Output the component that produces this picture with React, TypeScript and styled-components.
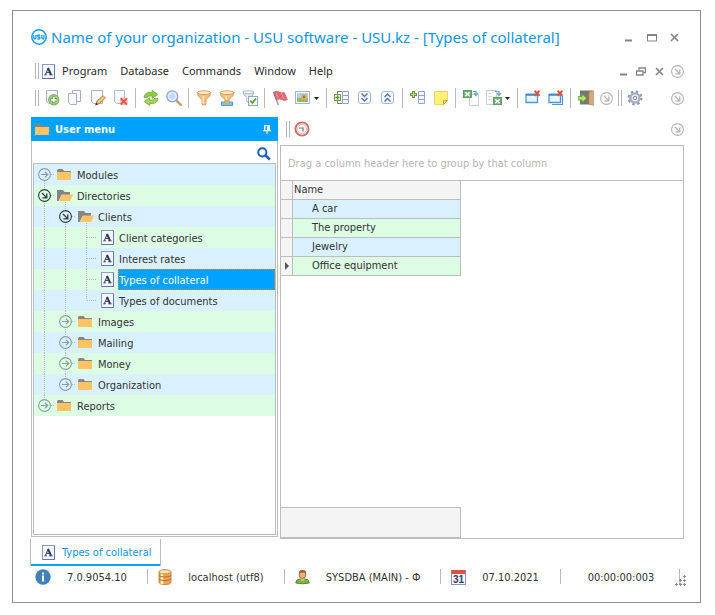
import React, { useState } from "react";
import styled, { createGlobalStyle, css } from "styled-components";

const ACCENT = "#00a2ff";
const LINE = "#bdbdbd";
const BLUE_ROW = "#d9f1ff";
const GREEN_ROW = "#dcfce4";

const GlobalStyle = createGlobalStyle`
  *, *::before, *::after { box-sizing: border-box; }
  body { margin: 0; background: #fff; }
  body, button, table { font-family: "DejaVu Sans Condensed", "DejaVu Sans", sans-serif; font-size: 11px; color: #333; }
  button { padding: 0; margin: 0; border: 0; background: none; line-height: inherit; cursor: pointer; }
  svg { display: block; flex: none; }
`;

/* ---------- window frame ---------- */

const Page = styled.div`
  display: flex;
  min-height: 100vh;
  padding: 10px 14px 12px 12px;
`;
const AppWindow = styled.div`
  display: flex;
  flex-direction: column;
  flex: 1;
  min-width: 0;
  border: 1px solid #8f8f8f;
  padding: 6px 14px 12px 17px;
`;
const TitleBar = styled.header`
  display: flex;
  align-items: center;
  height: 40px;
  padding-left: 1px;
  gap: 4px;
`;
const Title = styled.h1`
  flex: 1;
  margin: 0;
  font: 400 15px/24px "Noto Sans", sans-serif;
  color: #0d97e8;
  white-space: nowrap;
`;
const Controls = styled.div<{ $size: number }>`
  display: flex;
  align-items: center;
  button {
    display: flex;
    align-items: center;
    justify-content: center;
    width: ${(p) => p.$size}px;
    height: 20px;
  }
`;
const MenuBar = styled.nav`
  display: flex;
  align-items: center;
  height: 28px;
  padding-left: 5px;
`;
const Spacer = styled.span`
  flex: 1;
`;
const MenuList = styled.div`
  display: flex;
  gap: 13px;
  padding-left: 7px;
`;
const MenuItem = styled.button`
  font: 400 11px/20px "Noto Sans", sans-serif;
  color: #2b2b2b;
`;
const Grip = styled.span<{ $gap?: number; $before?: number }>`
  flex: none;
  width: 4px;
  height: 16px;
  margin-left: ${(p) => p.$before ?? 0}px;
  margin-right: ${(p) => p.$gap ?? 3}px;
  border: solid #b5b5b5;
  border-width: 0 1px;
`;

/* ---------- tool bars ---------- */

const ToolBar = styled.div`
  display: flex;
  align-items: center;
  height: 26px;
  padding-left: 5px;
  margin-bottom: 6px;
`;
const ToolButton = styled.button<{ $menu?: boolean }>`
  display: flex;
  align-items: center;
  flex: none;
  gap: 3px;
  width: ${(p) => (p.$menu ? 32 : 23)}px;
  height: 22px;
  padding-left: 4px;
`;
const Divider = styled.span`
  flex: none;
  width: 1px;
  height: 20px;
  margin: 0 3px;
  background: #b8b8b8;
`;
const RoundButton = styled.button`
  display: flex;
  align-items: center;
  justify-content: center;
  width: 18px;
  height: 18px;
`;

/* ---------- body ---------- */

const Workspace = styled.main`
  display: grid;
  grid-template-columns: 247px minmax(0, 1fr);
  gap: 2px;
  flex: 1;
  padding: 0 2px 0 1px;
`;
const SidePanel = styled.aside`
  display: flex;
  flex-direction: column;
  border: 1px solid ${LINE};
  border-top: 0;
`;
const PanelHeader = styled.div`
  display: flex;
  align-items: center;
  height: 24px;
  margin: 0 -1px;
  padding: 0 7px 0 4px;
  gap: 6px;
  background: ${ACCENT};
  color: #fff;
  font-weight: 700;
`;
const SearchRow = styled.div`
  display: flex;
  justify-content: flex-end;
  height: 22px;
  padding: 4px 6px 0 0;
`;
const TreeBox = styled.div`
  flex: 1;
  margin: 0 1px 1px;
  border: 1px solid ${LINE};
`;
const Tree = styled.ul`
  list-style: none;
  margin: 0;
  padding: 0;
`;
const TreeRow = styled.li<{ $green: boolean }>`
  display: flex;
  height: 21px;
  background: ${(p) => (p.$green ? GREEN_ROW : BLUE_ROW)};
`;

type Guide = "none" | "full" | "top" | "bottom";
const dotsDown = "repeating-linear-gradient(to bottom, #b4bcbc 0 1px, transparent 1px 2px)";
const dotsAcross = "repeating-linear-gradient(to right, #b4bcbc 0 1px, transparent 1px 2px)";
const guideLayer: Record<Guide, string> = {
  none: "linear-gradient(transparent, transparent) 0 0 / 0 0 no-repeat",
  full: `${dotsDown} 10px 0 / 1px 21px no-repeat`,
  top: `${dotsDown} 10px 0 / 1px 10px no-repeat`,
  bottom: `${dotsDown} 10px 11px / 1px 10px no-repeat`,
};
const Cell = styled.span<{ $guide?: Guide; $branch?: boolean }>`
  display: flex;
  align-items: center;
  justify-content: center;
  flex: none;
  width: 21px;
  height: 21px;
  background: ${(p) => guideLayer[p.$guide || "none"]}${(p) =>
    p.$branch ? `, ${dotsAcross} 11px 10px / 10px 1px no-repeat` : ""};
`;
const IconCell = styled(Cell)<{ $inset: number }>`
  justify-content: flex-start;
  padding-left: ${(p) => p.$inset}px;
`;
const Toggle = styled.button<{ $green: boolean }>`
  border-radius: 50%;
  background: ${(p) => (p.$green ? GREEN_ROW : BLUE_ROW)};
`;
const NodeLabel = styled.button<{ $selected: boolean }>`
  flex: 1;
  padding: 2px 0 0 1px;
  line-height: 19px;
  text-align: left;
  ${(p) =>
    p.$selected &&
    css`
      background: ${ACCENT};
      color: #fff;
      outline: 1px dotted #d08050;
      outline-offset: -1px;
    `}
`;

const Content = styled.section`
  display: flex;
  flex-direction: column;
  min-width: 0;
`;
const ContentBar = styled.div`
  display: flex;
  align-items: center;
  height: 24px;
  margin-bottom: 4px;
  padding-left: 6px;
  margin-right: -2px;
`;
const GridFrame = styled.div`
  display: flex;
  flex-direction: column;
  align-items: flex-start;
  flex: 1;
  border: 1px solid ${LINE};
  margin-bottom: -2px;
`;
const GroupHint = styled.div`
  align-self: stretch;
  height: 35px;
  padding-left: 7px;
  border-bottom: 1px solid ${LINE};
  line-height: 36px;
  color: #b4b4b4;
`;
const DataTable = styled.table`
  width: 180px;
  border-collapse: separate;
  border-spacing: 0;
  table-layout: fixed;
  th, td {
    height: 19px;
    padding: 0;
    border: solid ${LINE};
    border-width: 0 1px 1px 0;
    text-align: left;
    font-weight: 400;
    line-height: 18px;
    white-space: nowrap;
  }
`;
const HeadCell = styled.th`
  background: #f4f4f4;
  && { padding-left: 1px; }
`;
const MarkerCell = styled.th`
  width: 12px;
  background: #f4f4f4;
  svg { margin: 0 auto; }
`;
const ValueCell = styled.td<{ $green: boolean }>`
  background: ${(p) => (p.$green ? GREEN_ROW : BLUE_ROW)};
  && { padding-left: 19px; }
`;
const Summary = styled.div`
  width: 180px;
  height: 31px;
  margin-top: auto;
  background: #f4f4f4;
  border: 1px solid ${LINE};
  border-left: 0;
`;

/* ---------- tabs and status ---------- */

const TabStrip = styled.div`
  display: flex;
  margin-top: 2px;
`;
const Tab = styled.button`
  display: flex;
  align-items: center;
  gap: 7px;
  height: 27px;
  padding: 0 9px 0 11px;
  border: solid ${LINE};
  border-width: 0 1px;
  box-shadow: inset 0 -2px ${ACCENT};
  color: #1293e2;
`;
const StatusBar = styled.footer`
  display: grid;
  grid-template-columns: 118fr 136fr 156fr 119fr 119fr 6px;
  height: 24px;
  padding: 2px 0 4px;
`;
const StatusCell = styled.div<{ $end?: boolean }>`
  display: flex;
  align-items: center;
  gap: 16px;
  padding-left: ${(p) => (p.$end ? 27 : 10)}px;
  white-space: nowrap;
  background: linear-gradient(#b8b8b8, #b8b8b8) right 1px / 1px 15px no-repeat;
  &:first-child { padding-left: 5px; }
`;
const ResizeMark = styled.span`
  display: flex;
  align-items: flex-end;
  justify-content: flex-end;
`;

/* ---------- drawings ---------- */

const Svg = ({ w = 16, h = 16, children }: { w?: number; h?: number; children: React.ReactNode }) => (
  <svg width={w} height={h} viewBox={`0 0 ${w} ${h}`} fill="none" aria-hidden="true">
    {children}
  </svg>
);

const Logo = () => (
  <Svg>
    <circle cx="8" cy="8" r="7.2" stroke="#149be9" strokeWidth="1.5" />
    <path d="M2.8 6v2.6q0 1.4 1.1 1.4T5 8.6V6M9 6.7Q8.6 6 7.8 6 6.6 6 6.6 7T7.8 8 9 9 7.8 10 6.5 9.3M10.8 6v2.6q0 1.4 1.1 1.4T13 8.6V6" stroke="#149be9" strokeWidth="1.3" />
  </Svg>
);

const RoundArrow = ({ color, down }: { color: string; down?: boolean }) => (
  <Svg w={13} h={13}>
    <circle cx="6.5" cy="6.5" r="5.9" stroke={color} strokeWidth="1.1" />
    {down ? (
      <path d="M4 4l4.6 4.6M8.8 4.4v4.4H4.4" stroke={color} strokeWidth="1.3" />
    ) : (
      <path d="M3 6.5h6.5M6.8 3.6l2.9 2.9-2.9 2.9" stroke={color} strokeWidth="1.2" />
    )}
  </Svg>
);

const FormIcon = () => (
  <Svg w={13} h={15}>
    <rect x=".5" y=".5" width="12" height="14" fill="#f3f7fd" stroke="#8f9bcd" />
    <path d="M12.5 1v13.5H.5" stroke="#6674b4" />
    <path d="M3.4 10.5l2.8-6.3M4.5 8.4h3.8" stroke="#2b3955" />
    <path d="M6 3.8l3 6.7" stroke="#2b3955" strokeWidth="1.9" />
    <path d="M2.4 10.8h2.4M7.2 10.8h3.4" stroke="#2b3955" />
  </Svg>
);

const Folder = ({ open }: { open?: boolean }) =>
  open ? (
    <Svg w={16} h={11}>
      <path d="M0 11V0h6l1.5 2H13v3H4.5L1.5 11z" fill="#858585" />
      <path d="M4.8 4.5H16L13.2 11H2z" fill="#ffc364" />
    </Svg>
  ) : (
    <Svg w={14} h={11}>
      <path d="M0 3V1.500L1 0h4.5L7 2h7v2H0z" fill="#858585" />
      <path d="M0 3h14v8H0z" fill="#ffc364" />
    </Svg>
  );

const AddIcon = () => (
  <Svg>
    <path d="M2.5 .5h11v13h-9l-2-2z" fill="#f8faff" stroke="#aab4da" />
    <circle cx="9.8" cy="9.8" r="5.2" fill="#a9cf8a" stroke="#76a758" />
    <path d="M9.8 6.400v6.800M6.400 9.800h6.800" stroke="#5c8f45" strokeWidth="3" />
    <path d="M9.8 7v5.600M7 9.800h5.600" stroke="#fff" strokeWidth="1.8" />
  </Svg>
);
const CopyIcon = () => (
  <Svg>
    <path d="M5.500 .5h8v11h-8z" fill="#fbfcff" stroke="#a3aeda" />
    <path d="M1.500 3.500h8v11h-6l-2-2z" fill="#f7f9ff" stroke="#a3aeda" />
  </Svg>
);
const EditIcon = () => (
  <Svg>
    <path d="M1.500 .5h11v13h-9l-2-2z" fill="#f8faff" stroke="#aab4da" />
    <path d="M6 14.500l1-3.500 6-5.500 2.400 2.400-6 5.600z" fill="#e9b871" stroke="#b08a4e" />
    <path d="M5.200 15.500l1-3 2 2z" fill="#3e3b38" />
    <path d="M8.200 12.300l5.200-4.800" stroke="#ffe3ac" />
  </Svg>
);
const DeleteIcon = () => (
  <Svg>
    <path d="M1.500 .5h10v13h-8l-2-2z" fill="#f8faff" stroke="#b2bbde" />
    <rect x="7" y="7.500" width="7.500" height="7.500" fill="#f7bdb5" />
    <path d="M7.800 8.300l6 6m0-6l-6 6" stroke="#d9584c" strokeWidth="1.900" />
  </Svg>
);
const RefreshIcon = () => (
  <Svg>
    <path d="M1 7.4Q1.6 2.7 6.2 2.5h3V.5l5.6 4-5.6 3.8V6H6.6Q4.4 6 4.2 7.8z" fill="#93cb45" stroke="#6aa636" strokeWidth=".8" />
    <path d="M15 8.6q-.6 4.7-5.2 4.9h-3v2l-5.6-4L6.8 7.7V10h2.6q2.2 0 2.4-1.8z" fill="#a5d655" stroke="#6aa636" strokeWidth=".8" />
  </Svg>
);
const ZoomIcon = () => (
  <Svg>
    <path d="M10.300 10.300l4.500 4.500" stroke="#cf9c74" strokeWidth="2.600" strokeLinecap="round" />
    <circle cx="6.300" cy="6.300" r="5.500" fill="#d4e6fb" stroke="#8ea6d8" strokeWidth="1.300" />
    <circle cx="6.300" cy="6.300" r="3.700" fill="#bcdcfa" stroke="#eef6ff" />
  </Svg>
);
const FunnelShape = ({ gray }: { gray?: boolean }) => (
  <>
    <path
      d="M1.2 2.6Q1.5 7 6 9v5.4q2 1.4 4 0V9q4.5-2 4.8-6.4z"
      fill={gray ? "#dfe3ea" : "#f5c17a"}
      stroke={gray ? "#99a2b2" : "#cf9a5c"}
      strokeWidth=".9"
    />
    <ellipse cx="8" cy="2.7" rx="6.8" ry="1.9" fill={gray ? "#f2f4f7" : "#ffe8c0"} stroke={gray ? "#99a2b2" : "#cf9a5c"} strokeWidth=".9" />
    <path d="M7.2 6v7.5" stroke={gray ? "#fff" : "#fff3d9"} strokeWidth="1.2" />
  </>
);
const FilterIcon = () => (
  <Svg>
    <FunnelShape />
  </Svg>
);
const FilterRowIcon = () => (
  <Svg>
    <FunnelShape />
    <path d="M2.5 12h11v3.5h-11z" fill="#84c1ea" stroke="#5b9bd2" />
    <path d="M5.5 10h5l-1 3.500h-3z" fill="#efa64e" />
  </Svg>
);
const FilterCheckIcon = () => (
  <Svg>
    <g transform="scale(.8)">
      <FunnelShape gray />
    </g>
    <rect x="6.5" y="6.5" width="9" height="9" fill="#f9fcff" stroke="#91a5cd" />
    <path d="M8.3 10.6l2.2 2.4 3.5-4.6" stroke="#63a83c" strokeWidth="1.8" />
  </Svg>
);
const FlagIcon = () => (
  <Svg>
    <path d="M1.5 2l4.8 13" stroke="#a9a19a" strokeWidth="1.5" />
    <path d="M1.600 2.500Q4 .2 7 2t5.200.5l3.100 7Q12.500 11.300 10 9.600T4.500 10.200z" fill="#dc6870" stroke="#c9636b" strokeWidth=".8" />
    <path d="M4 2.500l2.500 6.500M9.500 3l2.500 6" stroke="#ee959a" />
  </Svg>
);
const PictureIcon = () => (
  <Svg>
    <rect x=".5" y="1.5" width="14" height="12" fill="#fff" stroke="#a4b4d6" />
    <path d="M2 3h11v5H2z" fill="#a9d4ee" />
    <path d="M2 8h11v4H2z" fill="#94bb6c" />
    <circle cx="9" cy="7" r="2.900" fill="#e4ad55" />
    <circle cx="9" cy="7" r="1.200" fill="#b76d35" />
  </Svg>
);
const Caret = () => (
  <Svg w={5} h={3}>
    <path d="M0 0h5L2.500 3z" fill="#222" />
  </Svg>
);
const ColumnIcon = ({ small }: { small?: boolean }) => (
  <Svg>
    {!small && <path d="M8 1.500H3.500V13.500H8" stroke="#777" />}
    <path d="M8.500 1.500h6v12h-6zM8.500 5.500h6M8.500 9.500h6" fill="#f5f8ff" stroke="#96a2cd" />
    {small ? (
      <>
        <path d="M3.500 1v7M0 4.500h7" stroke="#6b9b45" strokeWidth="3" />
        <path d="M3.500 2v5M1 4.500h5" stroke="#b5d990" />
      </>
    ) : (
      <>
        <rect x=".5" y="4.500" width="6" height="6" fill="#dcefc5" stroke="#6f9e49" />
        <path d="M3.500 5.500v4M1.500 7.500h4" stroke="#54852f" strokeWidth="1.200" />
      </>
    )}
  </Svg>
);
const ChevronsIcon = ({ up }: { up?: boolean }) => (
  <Svg>
    <rect x="1.500" y="1.500" width="12" height="12" rx="2.500" fill="#f8fcff" stroke="#9bbbe0" />
    <path d={up ? "M4.500 7l3-3 3 3M4.500 11.500l3-3 3 3" : "M4.500 3.500l3 3 3-3M4.500 8l3 3 3-3"} stroke="#5d73aa" strokeWidth="1.500" />
  </Svg>
);
const NoteIcon = () => (
  <Svg>
    <path d="M1.500 1.500h13v9l-4 4h-9z" fill="#fff07a" stroke="#e8d36c" />
    <path d="M10.500 14.500v-4h4z" fill="#f8d75b" stroke="#d3a940" />
  </Svg>
);
const SheetMark = ({ x, y }: { x: number; y: number }) => (
  <g transform={`translate(${x} ${y})`}>
    <rect x=".5" y=".5" width="8" height="7" fill="#6fb075" stroke="#5ca264" />
    <path d="M2.300 2.200l4.400 4m0-4l-4.400 4" stroke="#fff" strokeWidth="1.400" />
  </g>
);
const ImportIcon = () => (
  <Svg>
    <path d="M6.500 4.500h9v11h-9z" fill="#fafbfb" stroke="#c8cdd1" />
    <SheetMark x={0} y={0} />
    <path d="M9.500 1.500h3.500V5M11 3l2 2.500L15 3" stroke="#6a9fc8" strokeWidth="1.200" />
  </Svg>
);
const ExportIcon = () => (
  <Svg>
    <path d="M.5 .5h10v14H.5z" fill="#fafbfb" stroke="#c8cdd1" />
    <path d="M2.500 3.500h3M2.500 6.500h3M2.500 9.500h3" stroke="#d5d9dc" />
    <SheetMark x={7} y={7} />
    <path d="M9 1.500h4V5M11 3l2 2.500L15 3" stroke="#6a9fc8" strokeWidth="1.200" />
  </Svg>
);
const CloseWindowIcon = ({ many }: { many?: boolean }) => (
  <Svg>
    {many && <path d="M4 14.500h10.500V6" stroke="#4a97e0" strokeWidth="1.200" />}
    <path d="M1 4.500h11.500v8H1z" fill="#e9f6ff" stroke="#4a97e0" strokeWidth="1.300" />
    <path d="M1 4.700h11.500" stroke="#3f8bd8" strokeWidth="2" />
    <path d="M9.500 .8l5 5m0-5l-5 5" stroke="#d9553e" strokeWidth="2" />
  </Svg>
);
const ExitIcon = () => (
  <Svg>
    <path d="M2 .5h12v14H2z" fill="#787673" />
    <path d="M11 2l4.500-1.500v15L11 14z" fill="#d5a97a" stroke="#b08a60" strokeWidth=".6" />
    <path d="M0 6.500h4V4l5 4.200-5 4.200V10H0z" fill="#b4e462" stroke="#5f9f33" strokeWidth=".8" />
  </Svg>
);
const GearIcon = () => (
  <Svg>
    <circle cx="8" cy="8" r="6.400" stroke="#8d97ae" strokeWidth="2.200" strokeDasharray="2.500 2.526" />
    <circle cx="8" cy="8" r="4.600" fill="#f3f5fa" stroke="#a4adc2" strokeWidth="2.400" />
    <circle cx="8" cy="8" r="1.800" fill="#fff" stroke="#78839e" />
  </Svg>
);
const ClockIcon = () => (
  <Svg>
    <circle cx="8" cy="8" r="6.600" fill="#fff" stroke="#d66a68" strokeWidth="1.900" />
    <circle cx="8" cy="8" r="4.700" stroke="#e9b6b2" />
    <path d="M5 7h4v3.500" stroke="#766b72" strokeWidth="1.200" />
  </Svg>
);
const PinIcon = () => (
  <Svg w={8} h={9}>
    <path d="M1 0h6v5h1v1.300H0V5h1zM3.500 6h1v3h-1z" fill="#fff" />
    <path d="M2.500 1H4v4H2.500z" fill={ACCENT} />
  </Svg>
);
const SearchIcon = () => (
  <Svg w={14} h={14}>
    <circle cx="5.300" cy="5.300" r="4.100" stroke="#1d5fbf" strokeWidth="2" />
    <path d="M8.500 8.500l4.300 4" stroke="#1d5fbf" strokeWidth="2.600" />
  </Svg>
);
const InfoIcon = () => (
  <Svg>
    <circle cx="8" cy="8" r="7.700" fill="#4180b8" />
    <path d="M7 6.500h2v6H7zM7 3.500h2v2H7z" fill="#fff" />
  </Svg>
);
const DatabaseIcon = () => (
  <Svg w={14} h={16}>
    <path d="M1 3v10q0 2.500 6 2.500t6-2.500V3z" fill="#f0a54c" stroke="#c98a4c" />
    <path d="M4 4v11" stroke="#fff0c7" strokeWidth="2.500" />
    <path d="M1 6.500q1 1.500 6 1.500t6-1.500M1 10q1 1.500 6 1.500t6-1.500" stroke="#b06a32" />
    <ellipse cx="7" cy="2.800" rx="6" ry="2.200" fill="#ffe1ad" stroke="#c98a4c" />
  </Svg>
);
const UserIcon = () => (
  <Svg w={15} h={16}>
    <path d="M.8 14q0-3.700 4-4h5.400q4 .3 4 4-6.700 1.500-13.400 0z" fill="#7bb642" stroke="#4e8a2b" />
    <path d="M5.500 9h4v2q-2 2-4 0z" fill="#e8b786" />
    <ellipse cx="7.500" cy="5.500" rx="3.300" ry="4" fill="#e9b27c" stroke="#a36b3c" />
    <path d="M4 5.500Q3 1 7.500 1T11 5.500L9.800 3.800H5.300z" fill="#a85d2e" />
  </Svg>
);
const DigitText = styled.text`
  font: 700 10px "Liberation Sans", sans-serif;
  fill: #2d3e63;
`;
const CalendarIcon = () => (
  <Svg w={15} h={15}>
    <rect x=".5" y=".5" width="14" height="14" fill="#fafbff" stroke="#8794bd" />
    <path d="M.5 0h14v4H.5z" fill="#dd5145" />
    <DigitText x="7.500" y="12.500" textAnchor="middle">31</DigitText>
  </Svg>
);
const gripDots = [[9, 1], [5, 5], [9, 5], [1, 9], [5, 9], [9, 9]];
const GripDots = () => (
  <Svg w={11} h={11}>
    {gripDots.map(([x, y]) => (
      <path key={`${x}-${y}`} d={`M${x - 1} ${y + 0.5}h3M${x + 0.5} ${y - 1}v3`} stroke="#8a8a8a" />
    ))}
  </Svg>
);
const MinimizeIcon = () => (
  <Svg w={9} h={9}>
    <path d="M1 7.500h7" stroke="#858585" strokeWidth="2" />
  </Svg>
);
const MaximizeIcon = () => (
  <Svg w={10} h={9}>
    <path d="M.5 1.500h9v6.500h-9z" stroke="#858585" />
    <path d="M0 2h10" stroke="#858585" strokeWidth="2" />
  </Svg>
);
const RestoreIcon = () => (
  <Svg w={10} h={9}>
    <path d="M3 3V1h6.500v4.500H7.500" stroke="#858585" strokeWidth="1.300" />
    <path d="M.5 4h6.500v4H.5z" stroke="#858585" strokeWidth="1.300" />
  </Svg>
);
const CloseIcon = () => (
  <Svg w={9} h={9}>
    <path d="M1 1l7 7m0-7l-7 7" stroke="#858585" strokeWidth="1.700" />
  </Svg>
);

/* ---------- data ---------- */

type Tool = { label: string; icon: React.ReactNode; menu?: boolean };
const toolGroups: Tool[][] = [
  [
    { label: "Add", icon: <AddIcon /> },
    { label: "Copy", icon: <CopyIcon /> },
    { label: "Edit", icon: <EditIcon /> },
    { label: "Delete", icon: <DeleteIcon /> },
  ],
  [
    { label: "Refresh", icon: <RefreshIcon /> },
    { label: "Find", icon: <ZoomIcon /> },
  ],
  [
    { label: "Filter", icon: <FilterIcon /> },
    { label: "Filter row", icon: <FilterRowIcon /> },
    { label: "Filter by value", icon: <FilterCheckIcon /> },
  ],
  [
    { label: "Flag", icon: <FlagIcon /> },
    { label: "Image", icon: <PictureIcon />, menu: true },
  ],
  [
    { label: "Group columns", icon: <ColumnIcon /> },
    { label: "Expand all", icon: <ChevronsIcon /> },
    { label: "Collapse all", icon: <ChevronsIcon up /> },
  ],
  [
    { label: "Add column", icon: <ColumnIcon small /> },
    { label: "Note", icon: <NoteIcon /> },
  ],
  [
    { label: "Import", icon: <ImportIcon /> },
    { label: "Export", icon: <ExportIcon />, menu: true },
  ],
  [
    { label: "Close window", icon: <CloseWindowIcon /> },
    { label: "Close all windows", icon: <CloseWindowIcon many /> },
  ],
];

type TreeNode = { label: string; guides: Guide[]; own: Guide; kind: "closed" | "open" | "form" };
const nodes: TreeNode[] = [
  { label: "Modules", guides: [], own: "bottom", kind: "closed" },
  { label: "Directories", guides: [], own: "full", kind: "open" },
  { label: "Clients", guides: ["full"], own: "full", kind: "open" },
  { label: "Client categories", guides: ["full", "full"], own: "full", kind: "form" },
  { label: "Interest rates", guides: ["full", "full"], own: "full", kind: "form" },
  { label: "Types of collateral", guides: ["full", "full"], own: "full", kind: "form" },
  { label: "Types of documents", guides: ["full", "full"], own: "top", kind: "form" },
  { label: "Images", guides: ["full"], own: "full", kind: "closed" },
  { label: "Mailing", guides: ["full"], own: "full", kind: "closed" },
  { label: "Money", guides: ["full"], own: "full", kind: "closed" },
  { label: "Organization", guides: ["full"], own: "top", kind: "closed" },
  { label: "Reports", guides: [], own: "top", kind: "closed" },
];

const records = ["A car", "The property", "Jewelry", "Office equipment"];
const statusItems = [
  { icon: <InfoIcon />, text: "7.0.9054.10" },
  { icon: <DatabaseIcon />, text: "localhost (utf8)" },
  { icon: <UserIcon />, text: "SYSDBA (MAIN) - Ф" },
  { icon: <CalendarIcon />, text: "07.10.2021" },
];

const Overflow = () => (
  <RoundButton aria-label="More buttons">
    <RoundArrow color="#b3b3b3" down />
  </RoundButton>
);

/* ---------- application ---------- */

export default function App() {
  const [selected, setSelected] = useState("Types of collateral");

  return (
    <>
      <GlobalStyle />
      <Page>
        <AppWindow>
          <TitleBar>
            <Logo />
            <Title>Name of your organization - USU software - USU.kz - [Types of collateral]</Title>
            <Controls $size={23}>
              <button aria-label="Minimize"><MinimizeIcon /></button>
              <button aria-label="Maximize"><MaximizeIcon /></button>
              <button aria-label="Close"><CloseIcon /></button>
            </Controls>
          </TitleBar>

          <MenuBar>
            <Grip />
            <FormIcon />
            <MenuList>
              {["Program", "Database", "Commands", "Window", "Help"].map((m) => (
                <MenuItem key={m}>{m}</MenuItem>
              ))}
            </MenuList>
            <Spacer />
            <Controls $size={18}>
              <button aria-label="Minimize document"><MinimizeIcon /></button>
              <button aria-label="Restore document"><RestoreIcon /></button>
              <button aria-label="Close document"><CloseIcon /></button>
            </Controls>
            <Overflow />
          </MenuBar>

          <ToolBar>
            <Grip $gap={1} />
            {toolGroups.map((group, i) => (
              <React.Fragment key={i}>
                {group.map((t) => (
                  <ToolButton key={t.label} aria-label={t.label} $menu={t.menu}>
                    {t.icon}
                    {t.menu && <Caret />}
                  </ToolButton>
                ))}
                <Divider />
              </React.Fragment>
            ))}
            <ToolButton aria-label="Exit"><ExitIcon /></ToolButton>
            <Overflow />
            <Grip $before={3} $gap={1} />
            <ToolButton aria-label="Settings"><GearIcon /></ToolButton>
            <Spacer />
            <Overflow />
          </ToolBar>

          <Workspace>
            <SidePanel>
              <PanelHeader>
                <Folder />
                <span>User menu</span>
                <Spacer />
                <button aria-label="Pin panel"><PinIcon /></button>
              </PanelHeader>
              <SearchRow>
                <button aria-label="Search menu"><SearchIcon /></button>
              </SearchRow>
              <TreeBox>
                <Tree role="tree">
                  {nodes.map((n, i) => {
                    const green = i % 2 === 1;
                    return (
                      <TreeRow key={n.label} role="treeitem" aria-selected={selected === n.label} $green={green}>
                        {n.guides.map((g, j) => (
                          <Cell key={j} $guide={g} />
                        ))}
                        <Cell $guide={n.own} $branch>
                          {n.kind !== "form" && (
                            <Toggle aria-label={`Toggle ${n.label}`} $green={green}>
                              <RoundArrow color={n.kind === "open" ? "#2d3a3c" : "#8a9c9f"} down={n.kind === "open"} />
                            </Toggle>
                          )}
                        </Cell>
                        <IconCell $guide={n.kind === "open" ? "bottom" : "none"} $inset={n.kind === "form" ? 4 : 2}>
                          {n.kind === "form" ? <FormIcon /> : <Folder open={n.kind === "open"} />}
                        </IconCell>
                        <NodeLabel $selected={selected === n.label} onClick={() => setSelected(n.label)}>
                          {n.label}
                        </NodeLabel>
                      </TreeRow>
                    );
                  })}
                </Tree>
              </TreeBox>
            </SidePanel>

            <Content>
              <ContentBar>
                <Grip />
                <RoundButton aria-label="Timer"><ClockIcon /></RoundButton>
                <Spacer />
                <Overflow />
              </ContentBar>
              <GridFrame>
                <GroupHint>Drag a column header here to group by that column</GroupHint>
                <DataTable>
                  <thead>
                    <tr>
                      <MarkerCell aria-label="Current row" />
                      <HeadCell scope="col">Name</HeadCell>
                    </tr>
                  </thead>
                  <tbody>
                    {records.map((r, i) => (
                      <tr key={r}>
                        <MarkerCell>
                          {i === records.length - 1 && (
                            <Svg w={4} h={8}>
                              <path d="M0 0l4 4-4 4z" fill="#555" />
                            </Svg>
                          )}
                        </MarkerCell>
                        <ValueCell $green={i % 2 === 1}>{r}</ValueCell>
                      </tr>
                    ))}
                  </tbody>
                </DataTable>
                <Summary />
              </GridFrame>
            </Content>
          </Workspace>

          <TabStrip>
            <Tab>
              <FormIcon />
              Types of collateral
            </Tab>
          </TabStrip>

          <StatusBar>
            {statusItems.map((s) => (
              <StatusCell key={s.text}>
                {s.icon}
                <span>{s.text}</span>
              </StatusCell>
            ))}
            <StatusCell $end>00:00:00:003</StatusCell>
            <ResizeMark><GripDots /></ResizeMark>
          </StatusBar>
        </AppWindow>
      </Page>
    </>
  );
}
